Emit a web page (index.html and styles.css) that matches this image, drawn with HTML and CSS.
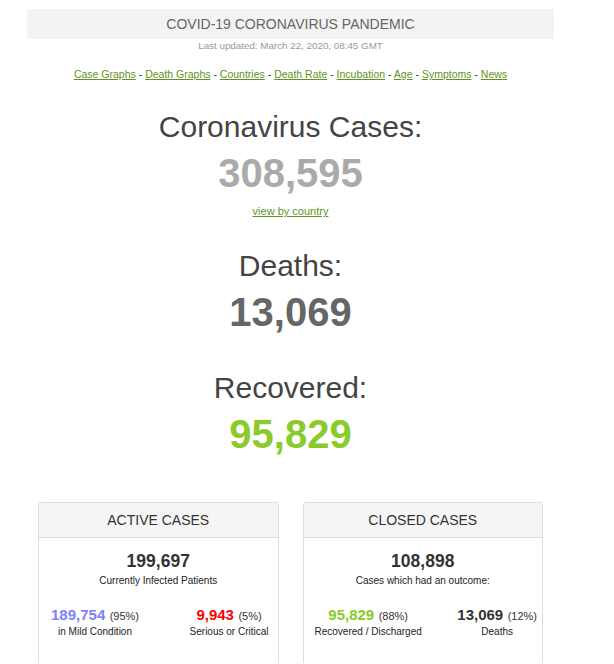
FILE: index.html
```html
<!DOCTYPE html>
<html lang="en">
<head>
    <meta charset="UTF-8">
    <title>Coronavirus Update</title>
    <link rel="stylesheet" href="styles.css">
</head>
<body>
    <div class="page">
        <div class="top-label">COVID-19 CORONAVIRUS PANDEMIC</div>
        <div class="last-updated">Last updated: March 22, 2020, 08:45 GMT</div>

        <div class="nav-links">
            <a href="#">Case Graphs</a> - <a href="#">Death Graphs</a> - <a href="#">Countries</a> - <a href="#">Death Rate</a> - <a href="#">Incubation</a> - <a href="#">Age</a> - <a href="#">Symptoms</a> - <a href="#">News</a>
        </div>

        <div class="counter first">
            <h1>Coronavirus Cases:</h1>
            <div class="counter-number cases">308,595</div>
            <a class="by-country" href="#">view by country</a>
        </div>

        <div class="counter">
            <h1>Deaths:</h1>
            <div class="counter-number deaths">13,069</div>
        </div>

        <div class="counter last">
            <h1>Recovered:</h1>
            <div class="counter-number recovered">95,829</div>
        </div>

        <div class="panels">
            <div class="panel">
                <div class="panel-heading">ACTIVE CASES</div>
                <div class="panel-body">
                    <div class="panel-number">199,697</div>
                    <div class="panel-caption">Currently Infected Patients</div>
                    <div class="split">
                        <div class="split-item">
                            <span class="split-number mild">189,754</span> <span class="pct">(95%)</span>
                            <div class="split-label">in Mild Condition</div>
                        </div>
                        <div class="split-item">
                            <span class="split-number critical">9,943</span> <span class="pct">(5%)</span>
                            <div class="split-label">Serious or Critical</div>
                        </div>
                    </div>
                </div>
            </div>

            <div class="panel">
                <div class="panel-heading">CLOSED CASES</div>
                <div class="panel-body">
                    <div class="panel-number">108,898</div>
                    <div class="panel-caption">Cases which had an outcome:</div>
                    <div class="split closed">
                        <div class="split-item">
                            <span class="split-number recovered">95,829</span> <span class="pct">(88%)</span>
                            <div class="split-label">Recovered / Discharged</div>
                        </div>
                        <div class="split-item">
                            <span class="split-number">13,069</span> <span class="pct">(12%)</span>
                            <div class="split-label">Deaths</div>
                        </div>
                    </div>
                </div>
            </div>
        </div>
    </div>
</body>
</html>
```

FILE: styles.css
```css
body {
    margin: 0;
    background: #fff;
    font-family: "Liberation Sans", Arial, sans-serif;
    color: #333;
}

.page {
    width: 527px;
    margin: 9px 0 0 27px;
    text-align: center;
}

.top-label {
    background: #f3f3f3;
    color: #666;
    font-size: 14px;
    height: 30px;
    line-height: 30px;
}

.last-updated {
    font-size: 9.8px;
    color: #999;
    margin-top: 1px;
}

.nav-links {
    font-size: 10.5px;
    margin-top: 17px;
    color: #333;
}

.nav-links a,
.by-country {
    color: #5f931d;
}

.counter {
    margin-top: 27px;
}

.counter.last {
    margin-top: 30px;
}

.counter h1 {
    font-size: 30px;
    font-weight: normal;
    color: #444;
    margin: 0;
    line-height: 40px;
}

.counter-number {
    font-size: 40px;
    font-weight: bold;
    line-height: 52px;
}

.counter-number.cases {
    color: #aaa;
}

.counter-number.deaths {
    color: #666;
}

.counter-number.recovered {
    color: #8aca2b;
}

.by-country {
    display: inline-block;
    font-size: 11px;
    margin-top: 6px;
}

.panels {
    display: flex;
    gap: 24px;
    padding: 0 11px;
    margin-top: 42px;
}

.panel {
    flex: 1;
    border: 1px solid #ddd;
    border-bottom: 0;
    border-radius: 3px 3px 0 0;
    height: 160px;
}

.panel-heading {
    background: #f5f5f5;
    border-bottom: 1px solid #ddd;
    font-size: 14px;
    color: #333;
    height: 34px;
    line-height: 34px;
}

.panel-body {
    padding-top: 13px;
}

.panel-number {
    font-size: 17.5px;
    font-weight: bold;
    color: #333;
}

.panel-caption {
    font-size: 10px;
    color: #222;
    margin-top: 3px;
}

.split {
    display: flex;
    justify-content: space-between;
    padding: 0 9px 0 12px;
    margin-top: 20px;
}

.split.closed {
    padding: 0 5px 0 11px;
}

.split-number {
    font-size: 15px;
    font-weight: bold;
    color: #333;
}

.split-number.mild {
    color: #8080ff;
}

.split-number.critical {
    color: #f00;
}

.split-number.recovered {
    color: #8aca2b;
}

.pct {
    font-size: 11px;
    color: #333;
}

.split-label {
    font-size: 10px;
    color: #222;
    margin-top: 2px;
}
```
